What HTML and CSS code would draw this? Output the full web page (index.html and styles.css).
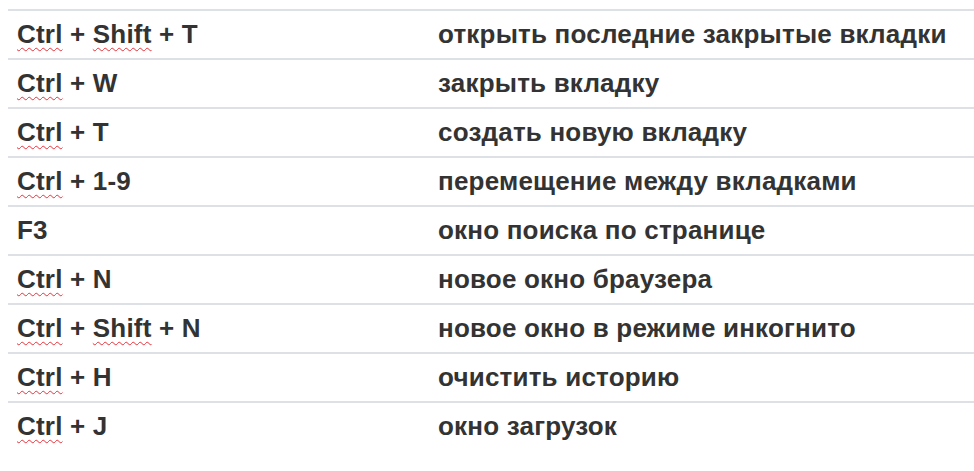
FILE: index.html
```html
<!DOCTYPE html>
<html lang="ru">
<head>
<meta charset="utf-8">
<link rel="stylesheet" href="styles.css">
</head>
<body>
<div class="table">
  <div class="row"><div class="key"><span class="sp">Ctrl</span> + <span class="sp">Shift</span> + T</div><div class="desc">открыть последние закрытые вкладки</div></div>
  <div class="row"><div class="key"><span class="sp">Ctrl</span> + W</div><div class="desc">закрыть вкладку</div></div>
  <div class="row"><div class="key"><span class="sp">Ctrl</span> + T</div><div class="desc">создать новую вкладку</div></div>
  <div class="row"><div class="key"><span class="sp">Ctrl</span> + 1-9</div><div class="desc">перемещение между вкладками</div></div>
  <div class="row"><div class="key">F3</div><div class="desc">окно поиска по странице</div></div>
  <div class="row"><div class="key"><span class="sp">Ctrl</span> + N</div><div class="desc">новое окно браузера</div></div>
  <div class="row"><div class="key"><span class="sp">Ctrl</span> + <span class="sp">Shift</span> + N</div><div class="desc">новое окно в режиме инкогнито</div></div>
  <div class="row"><div class="key"><span class="sp">Ctrl</span> + H</div><div class="desc">очистить историю</div></div>
  <div class="row last"><div class="key"><span class="sp">Ctrl</span> + J</div><div class="desc">окно загрузок</div></div>
</div>
</body>
</html>
```
FILE: styles.css
```css
html, body {
  margin: 0;
  background: #ffffff;
}
body {
  padding: 9px 0 0 8px;
  font-family: "Liberation Sans", Arial, sans-serif;
  font-weight: bold;
  font-size: 26px;
  letter-spacing: 0.2px;
  color: #333333;
  overflow: hidden;
}
.table {
  display: flex;
  flex-direction: column;
}
.row {
  display: grid;
  grid-template-columns: 421px 1fr;
  height: 47px;
  border-top: 2px solid #dde0e4;
  align-items: center;
}
.key, .desc {
  padding-left: 9px;
  line-height: 30px;
  margin-top: -1px;
  white-space: nowrap;
}
.sp {
  text-decoration: underline wavy #e8323a;
  text-decoration-thickness: 1px;
  text-underline-offset: 4px;
}
```
